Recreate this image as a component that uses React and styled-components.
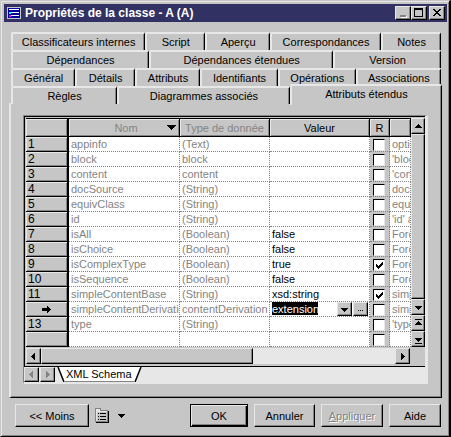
import React from "react";
import styled, { createGlobalStyle, css } from "styled-components";

const tabRows = [
  [
    { name: "Classificateurs internes", size: 136 },
    { name: "Script", size: 59 },
    { name: "Aperçu", size: 64 },
    { name: "Correspondances", size: 112 },
    { name: "Notes", size: 59 },
  ],
  [
    { name: "Dépendances", size: 138 },
    { name: "Dépendances étendues", size: 185 },
    { name: "Version", size: 107 },
  ],
  [
    { name: "Général", size: 64 },
    { name: "Détails", size: 59 },
    { name: "Attributs", size: 65 },
    { name: "Identifiants", size: 78 },
    { name: "Opérations", size: 78 },
    { name: "Associations", size: 86 },
  ],
  [
    { name: "Règles", size: 105 },
    { name: "Diagrammes associés", size: 173 },
    { name: "Attributs étendus", size: 152, selected: true },
  ],
];

const attributes = [
  { id: "1", name: "appinfo", type: "(Text)", value: "", text: "option" },
  { id: "2", name: "block", type: "block", value: "", text: "'block" },
  { id: "3", name: "content", type: "content", value: "", text: "'cont" },
  { id: "4", name: "docSource", type: "(String)", value: "", text: "docS" },
  { id: "5", name: "equivClass", type: "(String)", value: "", text: "equiv" },
  { id: "6", name: "id", type: "(String)", value: "", text: "'id' a" },
  { id: "7", name: "isAll", type: "(Boolean)", value: "false", text: "Force" },
  { id: "8", name: "isChoice", type: "(Boolean)", value: "false", text: "Force" },
  { id: "9", name: "isComplexType", type: "(Boolean)", value: "true", text: "Force", checked: true },
  { id: "10", name: "isSequence", type: "(Boolean)", value: "false", text: "Force" },
  { id: "11", name: "simpleContentBase", type: "(String)", value: "xsd:string", text: "simpl", checked: true },
  { id: "12", name: "simpleContentDerivation", type: "contentDerivation", value: "extension", text: "simpl", current: true },
  { id: "13", name: "type", type: "(String)", value: "", text: "'type" },
  { id: "", name: "", type: "", value: "", text: "" },
];

const Arrow = ({ direction = "down", color = "#000", bar }) => {
  const shapes = {
    down: "M2 4h7v1h-1v1h-1v1h-1v1h-1v-1h-1v-1h-1v-1h-1z",
    up: "M5 3h1v1h1v1h1v1h1v1h-7v-1h1v-1h1v-1h1z",
    left: "M7 2v7h-1v-1h-1v-1h-1v-1h-1v-1h1v-1h1v-1h1v-1z",
    right: "M4 2v7h1v-1h1v-1h1v-1h1v-1h-1v-1h-1v-1h-1v-1z",
  };
  return (
    <svg width="11" height="11" shapeRendering="crispEdges" aria-hidden="true">
      <path d={shapes[direction]} fill={color} />
      {bar === "top" && <path d="M2 1h7v1h-7z" fill={color} />}
      {bar === "bottom" && <path d="M2 9h7v1h-7z" fill={color} />}
    </svg>
  );
};

const ValueEditor = ({ value }) => (
  <Editor>
    <Combo>
      <ComboSelect aria-label="Valeur" defaultValue={value}>
        <option>extension</option>
        <option>restriction</option>
      </ComboSelect>
      <ComboArrow>
        <Arrow />
      </ComboArrow>
    </Combo>
    <SmallButton type="button" aria-label="Parcourir">
      <svg width="7" height="7" shapeRendering="crispEdges">
        <path d="M1 4h1v1h-1zM3 4h1v1h-1zM5 4h1v1h-1z" />
      </svg>
    </SmallButton>
  </Editor>
);

const App = () => {
  return (
    <>
      <GlobalStyle />
      <Window>
        <TitleBar>
          <svg width="14" height="12" shapeRendering="crispEdges" aria-hidden="true">
            <path fill="#c6c6c6" d="M0 0h14v12h-14z" />
            <path fill="#00009c" d="M1 1h12v10h-12z" />
            <path fill="#fff" d="M2 2h10v1h-10zM4 5h8v1h-8zM4 8h8v1h-8z" />
            <path fill="#0ff" d="M2 5h2v2h-2z" />
            <path fill="#f0f" d="M2 8h2v2h-2z" />
          </svg>
          <h1>Propriétés de la classe - A (A)</h1>
          <WindowButton type="button" aria-label="Réduire">
            <svg width="12" height="10" shapeRendering="crispEdges">
              <path fill="#fff" d="M4 8h6v2h-6z" />
              <path fill="#848484" d="M3 7h6v2h-6z" />
            </svg>
          </WindowButton>
          <WindowButton type="button" aria-label="Agrandir">
            <svg width="12" height="10" shapeRendering="crispEdges">
              <path fillRule="evenodd" d="M1 0h9v9h-9zM2 2v6h7v-6z" />
            </svg>
          </WindowButton>
          <WindowButton type="button" aria-label="Fermer" $apart>
            <svg width="12" height="10" shapeRendering="crispEdges">
              <path d="M2 1h2v1h1v1h2v-1h1v-1h2v1h-1v1h-1v1h-1v1h1v1h1v1h1v1h-2v-1h-1v-1h-2v1h-1v1h-2v-1h1v-1h1v-1h1v-1h-1v-1h-1v-1h-1z" />
            </svg>
          </WindowButton>
        </TitleBar>

        <Content>
          <div role="tablist">
            {tabRows.map((row, index) => (
              <TabRow key={index}>
                {row.map((tab) => (
                  <Tab
                    key={tab.name}
                    type="button"
                    role="tab"
                    aria-selected={!!tab.selected}
                    $size={tab.size}
                    $selected={tab.selected}
                  >
                    {tab.name}
                  </Tab>
                ))}
              </TabRow>
            ))}
          </div>

          <Panel>
            <Sheet>
              <SheetTop>
                <TableWrapper>
                  <Table>
                    <colgroup>
                      <Col $width={43} />
                      <Col $width={111} />
                      <Col $width={90} />
                      <Col />
                      <Col $width={20} />
                      <Col $width={21} />
                    </colgroup>
                    <thead>
                      <tr>
                        <HeadCell $corner />
                        <HeadCell $muted>
                          <SortHeader>
                            <span>Nom</span>
                            <svg width="9" height="5" shapeRendering="crispEdges">
                              <path d="M0 0h9v1h-1v1h-1v1h-1v1h-1v1h-1v-1h-1v-1h-1v-1h-1v-1h-1z" />
                            </svg>
                          </SortHeader>
                        </HeadCell>
                        <HeadCell $muted>Type de donnée</HeadCell>
                        <HeadCell>Valeur</HeadCell>
                        <HeadCell>R</HeadCell>
                        <HeadCell />
                      </tr>
                    </thead>
                    <tbody>
                      {attributes.map((item, index) => (
                        <tr key={index}>
                          <RowHead $current={item.current}>
                            {item.current ? (
                              <svg width="10" height="7" shapeRendering="crispEdges">
                                <path d="M0 2h5v-2h1v1h1v1h1v1h1v1h-1v1h-1v1h-1v1h-1v-2h-5z" />
                              </svg>
                            ) : (
                              item.id
                            )}
                          </RowHead>
                          <Cell $muted>{item.name}</Cell>
                          <Cell $muted>{item.type}</Cell>
                          <Cell>
                            {item.current ? <ValueEditor value={item.value} /> : item.value}
                          </Cell>
                          <CheckCell>
                            <CheckBox
                              type="checkbox"
                              aria-label={`R ${item.name}`}
                              defaultChecked={item.checked}
                            />
                          </CheckCell>
                          <Cell $muted>{item.text}</Cell>
                        </tr>
                      ))}
                    </tbody>
                  </Table>
                </TableWrapper>
                <VerticalScroll>
                  <ScrollButton type="button" aria-label="Haut">
                    <Arrow direction="up" />
                  </ScrollButton>
                  <VerticalThumb />
                  <ScrollButton type="button" aria-label="Bas">
                    <Arrow />
                  </ScrollButton>
                  <ScrollButton type="button" aria-label="Première ligne">
                    <Arrow direction="up" bar="top" />
                  </ScrollButton>
                  <ScrollButton type="button" aria-label="Dernière ligne">
                    <Arrow bar="bottom" />
                  </ScrollButton>
                </VerticalScroll>
              </SheetTop>

              <HorizontalScroll>
                <ScrollButton type="button" aria-label="Gauche">
                  <Arrow direction="left" />
                </ScrollButton>
                <Track>
                  <HorizontalThumb />
                </Track>
                <ScrollButton type="button" aria-label="Droite">
                  <Arrow direction="right" />
                </ScrollButton>
              </HorizontalScroll>

              <SheetBar>
                <ScrollButton type="button" aria-label="Feuille précédente" disabled>
                  <Arrow direction="left" color="#848484" />
                </ScrollButton>
                <ScrollButton type="button" aria-label="Feuille suivante" disabled>
                  <Arrow direction="right" color="#848484" />
                </ScrollButton>
                <SheetTab type="button">
                  <svg width="8" height="15">
                    <path d="M0 0h8v15h-1z" fill="#fff" />
                    <path d="M1 0L7 15" stroke="#000" strokeWidth="1.5" />
                  </svg>
                  <span>XML Schema</span>
                  <svg width="8" height="15">
                    <path d="M0 0h8L1 15h-1z" fill="#fff" />
                    <path d="M7 0L1 15" stroke="#000" strokeWidth="1.5" />
                  </svg>
                </SheetTab>
              </SheetBar>
            </Sheet>
          </Panel>
        </Content>

        <Footer>
          <Button type="button" $width={74}>
            &lt;&lt; Moins
          </Button>
          <MenuButton type="button" aria-label="Menu">
            <svg width="14" height="15" shapeRendering="crispEdges">
              <path fill="#848484" d="M0 0h6v2h7v12h-13z" />
              <path fill="#e7e7e7" d="M1 1h4v2h7v10h-11z" />
              <path fill="#c6c6c6" d="M2 4h10v9h-10z" />
              <path d="M13 3h1v12h-13v-1h12zM3 5h1v1h-1zM5 5h6v1h-6zM3 8h1v1h-1zM5 8h6v1h-6zM3 11h1v1h-1zM5 11h6v1h-6z" />
            </svg>
            <Arrow />
          </MenuButton>
          <Spacer />
          <Button type="submit" $width={58} $primary>
            OK
          </Button>
          <Button type="button" $width={61}>
            Annuler
          </Button>
          <Button type="button" $width={62} disabled>
            <u>A</u>ppliquer
          </Button>
          <Button type="button" $width={52}>
            Aide
          </Button>
        </Footer>
      </Window>
    </>
  );
};

export default App;

const GlobalStyle = createGlobalStyle`
  * {
    box-sizing: border-box;
  }

  body {
    margin: 0;
    background-color: #c6c6c6;
    font-family: "Liberation Sans", Arial, sans-serif;
    font-size: 11px;
    line-height: 14px;
    color: #000;
  }

  button, select {
    font: inherit;
    color: inherit;
  }

  svg {
    display: block;
    flex: none;
  }
`;

const raised = css`
  background-color: #c6c6c6;
  border: 1px solid #e7e7e7;
  border-right-color: #000;
  border-bottom-color: #000;
  box-shadow: inset -1px -1px #848484;
`;

const Window = styled.main`
  padding: 3px 2px 9px 3px;
  background-color: #c6c6c6;
  border: 1px solid #c6c6c6;
  border-right: 2px solid #000;
  border-bottom-color: #000;
  box-shadow: inset 1px 1px #e7e7e7, inset -1px -1px #848484;
`;

const TitleBar = styled.header`
  display: flex;
  align-items: center;
  height: 18px;
  padding: 0 2px 0 3px;
  background-color: #313163;

  h1 {
    flex: 1;
    margin: 0 0 0 4px;
    color: #fff;
    font-size: 12px;
    line-height: 18px;
    white-space: nowrap;
  }
`;

const WindowButton = styled.button`
  ${raised}
  display: flex;
  justify-content: center;
  width: 16px;
  height: 14px;
  margin-left: ${({ $apart }) => ($apart ? "2px" : "0")};
  padding: 1px 0 0;
`;

const Content = styled.section`
  padding: 10px 5px 0;
`;

const TabRow = styled.div`
  display: flex;
  height: 18px;
  margin: 0 1px 0 2px;
`;

const Tab = styled.button`
  flex: ${({ $size }) => $size} 1 0;
  min-width: 0;
  padding: 0 0 1px;
  white-space: nowrap;
  background-color: #c6c6c6;
  border: solid #e7e7e7;
  border-width: 2px 1px 0 2px;
  border-right-color: #000;
  border-radius: 2px 2px 0 0;
  box-shadow: inset -1px 0 #848484;
  ${({ $selected }) =>
    $selected &&
    css`
      z-index: 1;
      margin: -2px -1px -1px 0;
      padding-bottom: 4px;
    `}
`;

const Panel = styled.div`
  margin-top: -1px;
  padding: 11px 13px 13px 12px;
  border: solid #e7e7e7;
  border-width: 1px 1px 1px 2px;
  border-right-color: #000;
  border-bottom-color: #000;
  box-shadow: inset -1px -1px #848484;
`;

const Sheet = styled.div`
  padding: 2px 0 0 2px;
  border: 1px solid #848484;
  border-right: 3px solid #e7e7e7;
  border-bottom: 2px solid #e7e7e7;
  box-shadow: inset 1px 1px #000;
`;

const SheetTop = styled.div`
  display: flex;
`;

const TableWrapper = styled.div`
  flex: 1;
  min-width: 0;
  background-color: #fff;
`;

const Table = styled.table`
  width: 100%;
  table-layout: fixed;
  border-collapse: separate;
  border-spacing: 0;
`;

const Col = styled.col`
  width: ${({ $width }) => ($width ? `${$width}px` : "auto")};
`;

const HeadCell = styled.th`
  height: 19px;
  padding: 0;
  overflow: hidden;
  font-weight: normal;
  white-space: nowrap;
  color: ${({ $muted }) => ($muted ? "#848484" : "#000")};
  background-color: #c6c6c6;
  border: solid #000;
  border-width: ${({ $corner }) => ($corner ? "1px 2px 1px 0" : "1px 1px 1px 0")};
  box-shadow: inset 1px 1px #e7e7e7, inset -1px -1px #848484;
`;

const SortHeader = styled.div`
  display: flex;
  align-items: center;
  padding-right: 3px;

  span {
    flex: 1;
    padding-left: 16px;
  }
`;

const RowHead = styled.th`
  height: 15px;
  padding: ${({ $current }) => ($current ? "0 0 0 16px" : "0 0 0 2px")};
  font-size: 12px;
  font-weight: normal;
  line-height: 14px;
  text-align: left;
  background-color: #c6c6c6;
  border: solid #000;
  border-width: 0 2px 1px 0;
  box-shadow: inset 1px 1px #e7e7e7, inset -1px -1px #848484;
`;

const Cell = styled.td`
  height: 15px;
  padding: 0 0 0 2px;
  overflow: hidden;
  white-space: nowrap;
  color: ${({ $muted }) => ($muted ? "#848484" : "#000")};
  background-color: #fff;
  border: dotted #848484;
  border-width: 0 1px 1px 0;
`;

const CheckCell = styled.td`
  height: 15px;
  padding: 1px 0 0 3px;
  background-color: #c6c6c6;
  border: dotted #848484;
  border-width: 0 1px 1px 0;
`;

const CheckBox = styled.input`
  display: block;
  appearance: none;
  width: 12px;
  height: 12px;
  margin: 0;
  background-color: #fff;
  border: 1px solid #000;
  border-right-color: #e7e7e7;
  border-bottom-color: #e7e7e7;

  &:checked {
    background-image: url("data:image/svg+xml,%3Csvg xmlns='http://www.w3.org/2000/svg' width='10' height='10' shape-rendering='crispEdges'%3E%3Cpath d='M2 4h1v1h1v1h1v-1h1v-1h1v-1h1v-1h1v3h-1v1h-1v1h-1v1h-1v1h-1v-1h-1v-1h-1z'/%3E%3C/svg%3E");
  }
`;

const Editor = styled.div`
  display: flex;
  height: 14px;
`;

const Combo = styled.div`
  display: grid;
  grid-template-columns: 1fr 15px;
  flex: 1;
  min-width: 0;
`;

const ComboSelect = styled.select`
  grid-area: 1 / 1 / 2 / 3;
  appearance: none;
  height: 14px;
  padding: 0;
  color: #fff;
  border: 0;
  border-radius: 0;
  background: #fff linear-gradient(#000, #000) no-repeat 0 0 / 46px 13px;

  option {
    color: #000;
  }
`;

const ComboArrow = styled.span`
  ${raised}
  grid-area: 1 / 2;
  display: flex;
  align-items: center;
  justify-content: center;
  pointer-events: none;
`;

const SmallButton = styled.button`
  ${raised}
  display: flex;
  align-items: center;
  justify-content: center;
  width: 15px;
  margin: 0 1px;
  padding: 0;
`;

const ScrollButton = styled.button`
  ${raised}
  display: flex;
  flex: none;
  align-items: center;
  justify-content: center;
  width: 15px;
  height: 16px;
  padding: 0;
`;

const VerticalScroll = styled.div`
  display: flex;
  flex-direction: column;
  width: 14px;

  button {
    width: 14px;
  }
`;

const VerticalThumb = styled.div`
  ${raised}
  flex: 1;
`;

const HorizontalScroll = styled.div`
  display: flex;
  height: 17px;
  padding: 1px 15px 0 0;
`;

const Track = styled.div`
  flex: 1;
  background-color: #e7e7e7;
`;

const HorizontalThumb = styled.div`
  ${raised}
  width: 60%;
  height: 16px;
`;

const SheetBar = styled.div`
  display: flex;
  gap: 1px;
  height: 16px;
  margin: 2px 0 0 -2px;
  background-color: #e7e7e7;
  border-top: 1px solid #000;

  > button {
    height: 15px;
  }
`;

const SheetTab = styled.button`
  display: flex;
  margin: 0 0 0 1px;
  padding: 0;
  background: none;
  border: 0;

  span {
    height: 15px;
    padding: 0 2px 0 1px;
    line-height: 15px;
    white-space: nowrap;
    background-color: #fff;
    border-bottom: 1px solid #848484;
  }
`;

const Footer = styled.footer`
  display: flex;
  align-items: center;
  gap: 6px;
  padding: 6px 6px 0 11px;
`;

const Spacer = styled.div`
  flex: 1;
`;

const Button = styled.button`
  ${raised}
  width: ${({ $width }) => $width}px;
  height: 23px;
  padding: 0;
  white-space: nowrap;
  ${({ $primary }) =>
    $primary &&
    css`
      border-color: #000;
      box-shadow: inset 1px 1px #e7e7e7, inset -1px -1px #000, inset -2px -2px #848484;
    `}

  &:disabled {
    color: #848484;
    text-shadow: 1px 1px #fff;
  }
`;

const MenuButton = styled.button`
  display: flex;
  align-items: center;
  gap: 7px;
  padding: 0;
  background: none;
  border: 0;
`;
